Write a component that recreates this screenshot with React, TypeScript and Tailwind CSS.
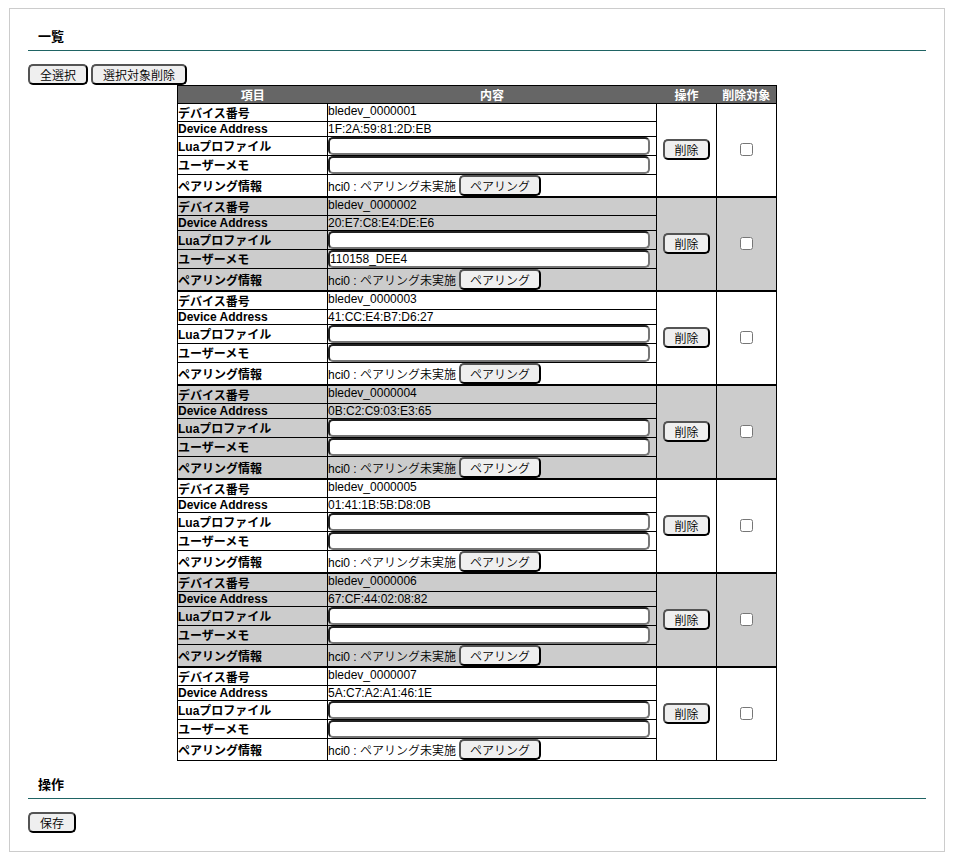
import React, { useState } from "react";

type Device = {
  id: string;
  address: string;
  profile: string;
  memo: string;
};

const initialDevices: Device[] = [
  { id: "bledev_0000001", address: "1F:2A:59:81:2D:EB", profile: "", memo: "" },
  { id: "bledev_0000002", address: "20:E7:C8:E4:DE:E6", profile: "", memo: "110158_DEE4" },
  { id: "bledev_0000003", address: "41:CC:E4:B7:D6:27", profile: "", memo: "" },
  { id: "bledev_0000004", address: "0B:C2:C9:03:E3:65", profile: "", memo: "" },
  { id: "bledev_0000005", address: "01:41:1B:5B:D8:0B", profile: "", memo: "" },
  { id: "bledev_0000006", address: "67:CF:44:02:08:82", profile: "", memo: "" },
  { id: "bledev_0000007", address: "5A:C7:A2:A1:46:1E", profile: "", memo: "" }
];

const cell = "border border-black p-0 align-top";
const labelCell = `${cell} text-left font-bold`;
const actionCell = "border border-black px-0 pt-0 pb-[2px] text-center align-middle";

type ButtonProps = {
  children: React.ReactNode;
  compact?: boolean;
  onClick?: () => void;
};

function Button({ children, compact = false, onClick }: ButtonProps) {
  return (
    <button
      type="button"
      onClick={onClick}
      className={`rounded-[5px] border-2 border-black bg-[#efefef] [border-style:outset] [font-weight:350] ${
        compact ? "px-[9px]" : "px-[10px]"
      }`}
    >
      {children}
    </button>
  );
}

function SectionTitle({ children }: { children: React.ReactNode }) {
  return (
    <h2 className="mb-[13px] border-b border-[#1f6464] pb-1 pl-[10px] text-[13px] leading-[19px] font-bold">
      {children}
    </h2>
  );
}

type TextFieldProps = {
  id: string;
  value: string;
  onChange: (value: string) => void;
};

function TextField({ id, value, onChange }: TextFieldProps) {
  return (
    <input
      id={id}
      type="text"
      value={value}
      onChange={(e) => onChange(e.target.value)}
      className="block h-[18px] w-[322px] rounded-[5px] border-2 border-[#767676] bg-white p-0 [border-style:inset]"
    />
  );
}

type DeviceRowsProps = {
  device: Device;
  index: number;
  checked: boolean;
  onChange: (device: Device) => void;
  onCheck: (checked: boolean) => void;
  onDelete: () => void;
};

function DeviceRows({ device, index, checked, onChange, onCheck, onDelete }: DeviceRowsProps) {
  const top = index > 0 ? "border-t-2" : "";

  return (
    <tbody className={index % 2 === 1 ? "bg-[#cccccc]" : "bg-white"}>
      <tr>
        <th scope="row" className={`${labelCell} ${top}`}>デバイス番号</th>
        <td className={`${cell} ${top}`}>{device.id}</td>
        <td rowSpan={5} className={`${actionCell} ${top}`}>
          <Button compact onClick={onDelete}>削除</Button>
        </td>
        <td rowSpan={5} className={`${actionCell} ${top}`}>
          <input
            type="checkbox"
            aria-label={`削除対象 ${device.id}`}
            checked={checked}
            onChange={(e) => onCheck(e.target.checked)}
            className="size-[13px] align-middle"
          />
        </td>
      </tr>
      <tr>
        <th scope="row" className={labelCell}>Device Address</th>
        <td className={cell}>{device.address}</td>
      </tr>
      <tr>
        <th scope="row" className={labelCell}>
          <label htmlFor={`${device.id}-profile`}>Luaプロファイル</label>
        </th>
        <td className={cell}>
          <TextField
            id={`${device.id}-profile`}
            value={device.profile}
            onChange={(profile) => onChange({ ...device, profile })}
          />
        </td>
      </tr>
      <tr>
        <th scope="row" className={labelCell}>
          <label htmlFor={`${device.id}-memo`}>ユーザーメモ</label>
        </th>
        <td className={cell}>
          <TextField
            id={`${device.id}-memo`}
            value={device.memo}
            onChange={(memo) => onChange({ ...device, memo })}
          />
        </td>
      </tr>
      <tr>
        <th scope="row" className="border border-black p-0 text-left align-middle font-bold">
          ペアリング情報
        </th>
        <td className={cell}>
          <div className="flex items-baseline gap-[3px] [font-weight:350]">
            <span>hci0 : ペアリング未実施</span>
            <Button compact>ペアリング</Button>
          </div>
        </td>
      </tr>
    </tbody>
  );
}

export default function App() {
  const [devices, setDevices] = useState(initialDevices);
  const [selected, setSelected] = useState<string[]>([]);

  const toggle = (id: string, on: boolean) =>
    setSelected((prev) => (on ? [...prev, id] : prev.filter((x) => x !== id)));

  return (
    <main className="mx-[9px] my-2 border border-[#cccccc] bg-white p-[18px] font-['Liberation_Sans','Noto_Sans_CJK_JP',sans-serif] text-[12px] leading-[normal] text-black">
      <section>
        <SectionTitle>一覧</SectionTitle>
        <div className="flex gap-[3px]">
          <Button onClick={() => setSelected(devices.map((d) => d.id))}>全選択</Button>
          <Button onClick={() => setDevices(devices.filter((d) => !selected.includes(d.id)))}>
            選択対象削除
          </Button>
        </div>
        <table className="mx-auto w-[600px] table-fixed border-collapse">
          <colgroup>
            <col className="w-[150px]" />
            <col />
            <col className="w-[60px]" />
            <col className="w-[60px]" />
          </colgroup>
          <thead className="bg-[#666666] text-white">
            <tr>
              <th scope="col" className="border-y border-l border-black p-0">項目</th>
              <th scope="col" className="border-y border-black p-0">内容</th>
              <th scope="col" className="border-y border-black p-0">操作</th>
              <th scope="col" className="border-y border-r border-black p-0">削除対象</th>
            </tr>
          </thead>
          {devices.map((device, index) => (
            <DeviceRows
              key={device.id}
              device={device}
              index={index}
              checked={selected.includes(device.id)}
              onChange={(next) => setDevices(devices.map((d) => (d.id === next.id ? next : d)))}
              onCheck={(on) => toggle(device.id, on)}
              onDelete={() => setDevices(devices.filter((d) => d.id !== device.id))}
            />
          ))}
        </table>
      </section>
      <section className="mt-[14px]">
        <SectionTitle>操作</SectionTitle>
        <div className="flex">
          <Button>保存</Button>
        </div>
      </section>
    </main>
  );
}
